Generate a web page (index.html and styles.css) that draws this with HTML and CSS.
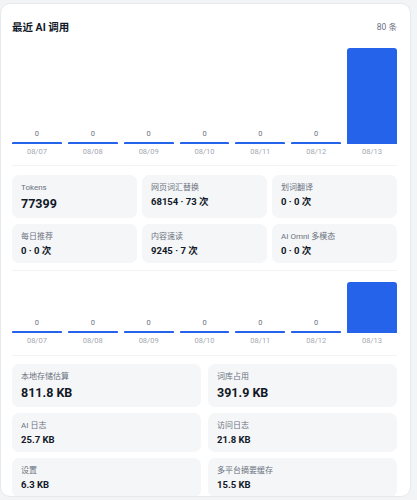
FILE: index.html
```html
<!DOCTYPE html>
<html lang="zh-CN">
<head>
  <meta charset="UTF-8">
  <title>统计</title>
  <meta name="viewport" content="width=device-width, initial-scale=1.0">
  <link rel="stylesheet" href="styles.css">
</head>
<body>

  <section class="card">
    <!-- Header -->
    <div class="card-head">
      <h2>最近 AI 调用</h2>
      <span class="count">80 条</span>
    </div>

    <!-- Daily calls -->
    <div class="chart chart-tall">
      <div class="col"><div class="plot"><span class="val">0</span><div class="bar"></div></div><span class="date">08/07</span></div>
      <div class="col"><div class="plot"><span class="val">0</span><div class="bar"></div></div><span class="date">08/08</span></div>
      <div class="col"><div class="plot"><span class="val">0</span><div class="bar"></div></div><span class="date">08/09</span></div>
      <div class="col"><div class="plot"><span class="val">0</span><div class="bar"></div></div><span class="date">08/10</span></div>
      <div class="col"><div class="plot"><span class="val">0</span><div class="bar"></div></div><span class="date">08/11</span></div>
      <div class="col"><div class="plot"><span class="val">0</span><div class="bar"></div></div><span class="date">08/12</span></div>
      <div class="col"><div class="plot"><div class="bar full"></div></div><span class="date">08/13</span></div>
    </div>

    <hr class="divider">

    <!-- Feature usage -->
    <div class="stats stats-3">
      <div class="stat">
        <span class="label">Tokens</span>
        <strong class="big">77399</strong>
      </div>
      <div class="stat">
        <span class="label">网页词汇替换</span>
        <strong>68154 · 73 次</strong>
      </div>
      <div class="stat">
        <span class="label">划词翻译</span>
        <strong>0 · 0 次</strong>
      </div>
      <div class="stat">
        <span class="label">每日推荐</span>
        <strong>0 · 0 次</strong>
      </div>
      <div class="stat">
        <span class="label">内容速读</span>
        <strong>9245 · 7 次</strong>
      </div>
      <div class="stat">
        <span class="label">AI Omni 多模态</span>
        <strong>0 · 0 次</strong>
      </div>
    </div>

    <hr class="divider">

    <div class="chart chart-short">
      <div class="col"><div class="plot"><span class="val">0</span><div class="bar"></div></div><span class="date">08/07</span></div>
      <div class="col"><div class="plot"><span class="val">0</span><div class="bar"></div></div><span class="date">08/08</span></div>
      <div class="col"><div class="plot"><span class="val">0</span><div class="bar"></div></div><span class="date">08/09</span></div>
      <div class="col"><div class="plot"><span class="val">0</span><div class="bar"></div></div><span class="date">08/10</span></div>
      <div class="col"><div class="plot"><span class="val">0</span><div class="bar"></div></div><span class="date">08/11</span></div>
      <div class="col"><div class="plot"><span class="val">0</span><div class="bar"></div></div><span class="date">08/12</span></div>
      <div class="col"><div class="plot"><div class="bar full"></div></div><span class="date">08/13</span></div>
    </div>

    <hr class="divider">

    <!-- Storage -->
    <div class="stats stats-2">
      <div class="stat">
        <span class="label">本地存储估算</span>
        <strong class="big">811.8 KB</strong>
      </div>
      <div class="stat">
        <span class="label">词库占用</span>
        <strong class="big">391.9 KB</strong>
      </div>
      <div class="stat">
        <span class="label">AI 日志</span>
        <strong>25.7 KB</strong>
      </div>
      <div class="stat">
        <span class="label">访问日志</span>
        <strong>21.8 KB</strong>
      </div>
      <div class="stat">
        <span class="label">设置</span>
        <strong>6.3 KB</strong>
      </div>
      <div class="stat">
        <span class="label">多平台摘要缓存</span>
        <strong>15.5 KB</strong>
      </div>
    </div>
  </section>

</body>
</html>
```

FILE: styles.css
```css
* {
  margin: 0;
  padding: 0;
  box-sizing: border-box;
}

body {
  font-family: 'Roboto', 'Noto Sans CJK SC', sans-serif;
  background: #f3f4f6;
  color: #111827;
  padding: 3px 6px 0 0;
  height: 500px;
  overflow: hidden;
}

.card {
  background: #fff;
  border: 1px solid #e7e9ee;
  border-radius: 10px;
  height: 494px;
  overflow: hidden;
  padding: 12px 13px 0 11px;
}

.card-head {
  display: flex;
  justify-content: space-between;
  align-items: center;
  height: 20px;
}

.card-head h2 {
  font-size: 10.5px;
  font-weight: 700;
}

.count {
  font-size: 8.5px;
  color: #6b7280;
}

/* bar charts */
.chart {
  display: grid;
  grid-template-columns: repeat(7, 1fr);
  gap: 6px;
}

.chart-tall {
  margin-top: 12px;
}

.chart-tall .plot {
  height: 96px;
}

.chart-short {
  margin-top: 11px;
}

.chart-short .plot {
  height: 51px;
}

.col {
  display: flex;
  flex-direction: column;
}

.plot {
  display: flex;
  flex-direction: column;
  justify-content: flex-end;
  align-items: stretch;
}

.val {
  font-size: 7.5px;
  line-height: 10px;
  color: #6b7280;
  text-align: center;
  margin-bottom: 3px;
}

.bar {
  height: 2px;
  background: #2563eb;
  border-radius: 1px 1px 0 0;
}

.bar.full {
  height: 100%;
  border-radius: 3px 3px 0 0;
}

.date {
  margin-top: 2px;
  font-size: 7.5px;
  line-height: 12px;
  color: #a3a8b1;
  text-align: center;
}

.divider {
  border: none;
  height: 1px;
  background: #f2f3f5;
  margin: 7px 0 9px;
}

.chart-short + .divider {
  margin-top: 8px;
  margin-bottom: 8px;
}

/* stat tiles */
.stats {
  display: grid;
  row-gap: 6px;
}

.stats-3 {
  grid-template-columns: repeat(3, 1fr);
  column-gap: 5px;
}

.stats-2 {
  grid-template-columns: repeat(2, 1fr);
  column-gap: 7px;
}

.stat {
  background: #f5f6f8;
  border-radius: 7px;
  padding: 6px 9px 5px;
  display: flex;
  flex-direction: column;
}

.label {
  font-size: 8px;
  line-height: 13px;
  color: #6b7280;
}

.stat strong {
  margin-top: 1px;
  font-size: 9.5px;
  line-height: 14px;
  font-weight: 700;
  color: #111827;
}

.stat strong.big {
  font-size: 12.5px;
  line-height: 18px;
}
```
